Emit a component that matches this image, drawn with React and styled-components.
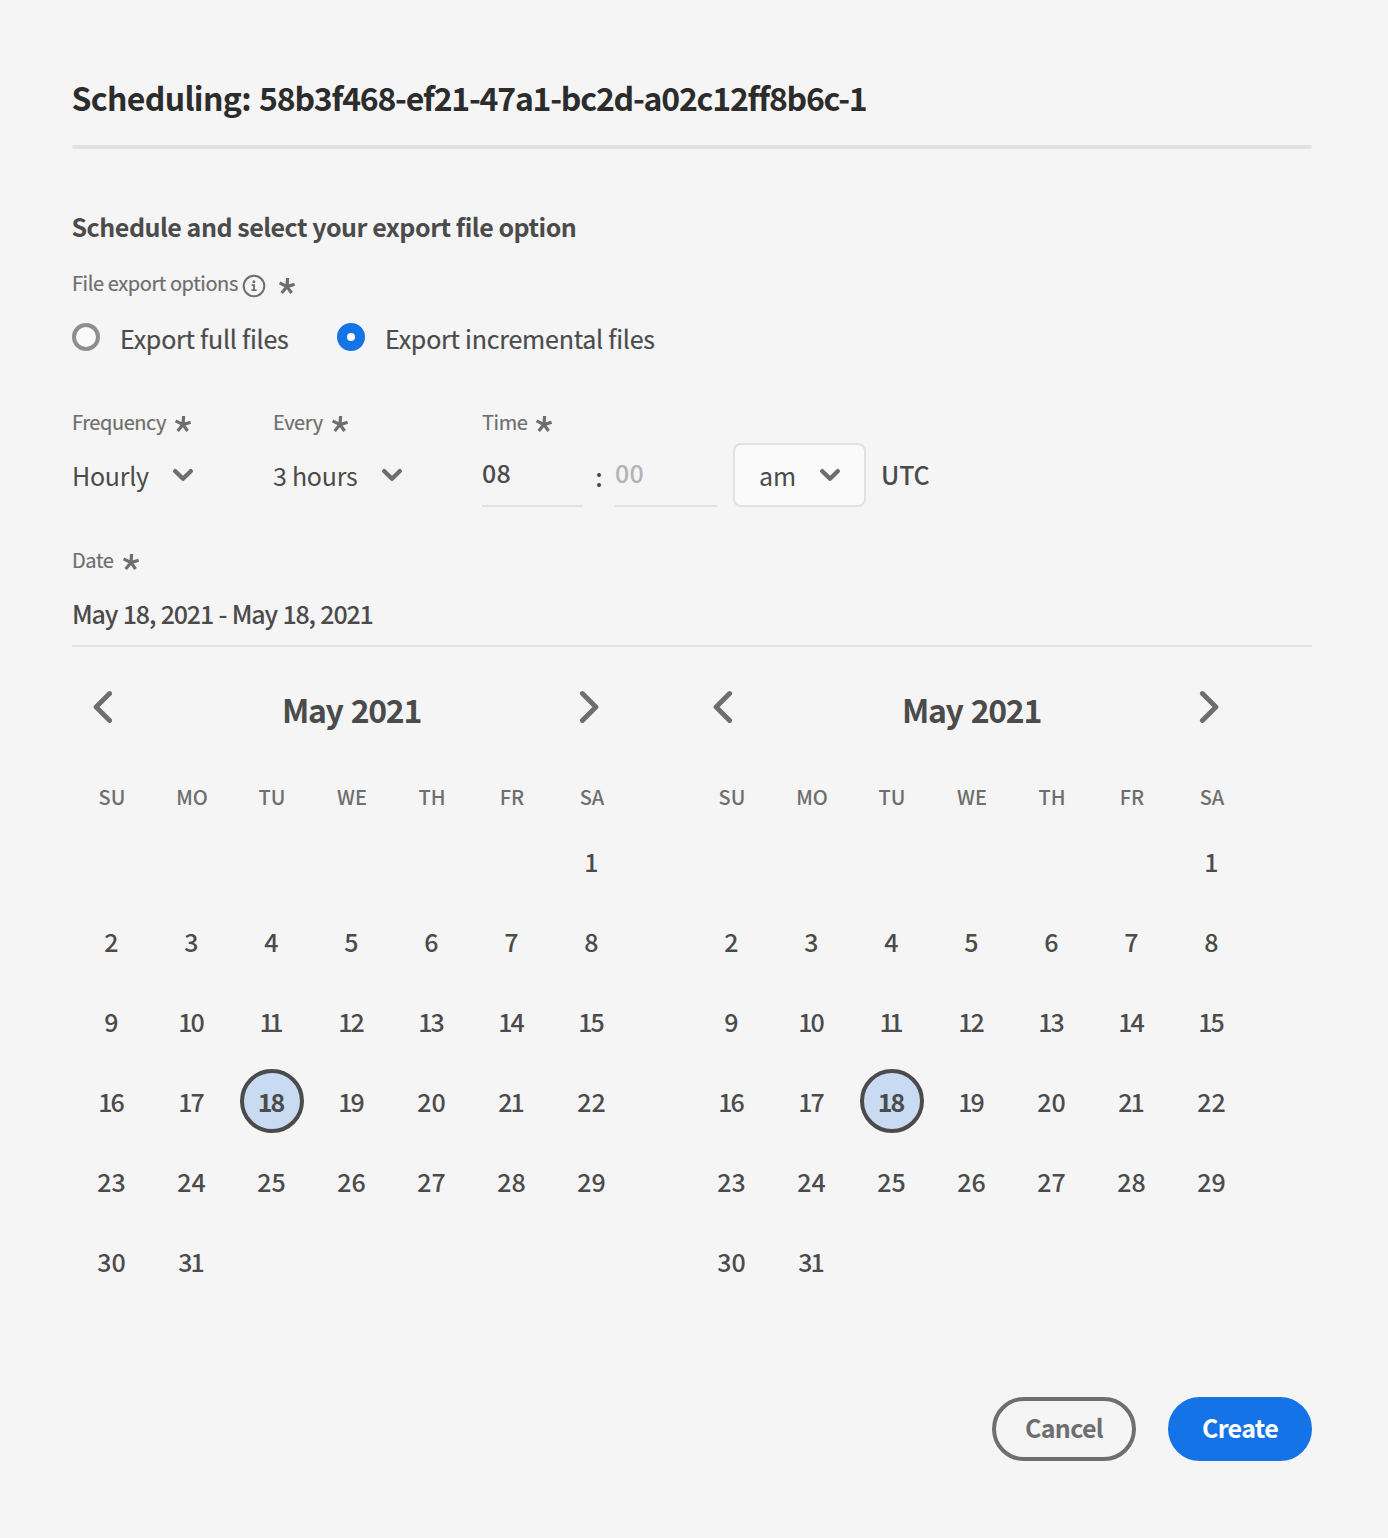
import React from "react";
import styled, { createGlobalStyle } from "styled-components";

const GlobalStyle = createGlobalStyle`
  * { box-sizing: border-box; }
  body {
    margin: 0;
    background: #f5f5f5;
    color: #4b4b4b;
    font-family: "Noto Sans CJK SC", "Open Sans", sans-serif;
    font-size: 25px;
  }
  button, input { font: inherit; color: inherit; }
`;

const Dialog = styled.main`
  width: 1388px;
  height: 1538px;
  padding: 72px 76px 77px 72px;
  display: flex;
  flex-direction: column;
`;

const Title = styled.h1`
  margin: 0 0 0 -0.5px;
  color: #2c2c2c;
  font-size: 32px;
  line-height: 50px;
  letter-spacing: -0.66px;
  word-spacing: 1.5px;
  white-space: nowrap;
`;

const JobId = styled.span`
  letter-spacing: -1.22px;
`;

const Divider = styled.hr`
  width: 100%;
  height: 4px;
  margin: 23px 0 61px;
  border: 0;
  border-radius: 2px;
  background: #e1e1e1;
`;

const Heading = styled.h2`
  margin: 0 0 29px -0.5px;
  font-size: 25px;
  line-height: 32px;
  letter-spacing: -0.48px;
`;

const Label = styled.div`
  display: flex;
  height: 24px;
  color: #6e6e6e;
  font-size: 20px;
  line-height: ${(p) => p.$lh || 26}px;
  white-space: nowrap;
  letter-spacing: -0.42px;
  -webkit-text-stroke: 0.2px #6e6e6e;
`;

const LabelText = styled.span`
  width: ${(p) => p.$w}px;
`;

const AsteriskSvg = styled.svg`
  width: 18px;
  height: 18px;
  margin-top: 6px;
  flex: none;
`;

const InfoSvg = styled.svg`
  width: 24px;
  height: 24px;
  margin: 3px 12px 0 0;
  flex: none;
`;

const RadioGroup = styled.div`
  display: flex;
  margin-top: 28px;
`;

const RadioOption = styled.label`
  display: flex;
  width: ${(p) => p.$w}px;
  height: 28px;
  gap: 20px;
  white-space: nowrap;
  line-height: 30px;
  letter-spacing: -0.23px;
  -webkit-text-stroke: 0.2px #4b4b4b;
`;

const RadioDot = styled.span`
  width: 28px;
  height: 28px;
  flex: none;
  border-radius: 50%;
  border: ${(p) => (p.$on ? "10px solid #1473e6" : "4px solid #8e8e8e")};
  background: ${(p) => (p.$on ? "#ffffff" : "#fafafa")};
`;

const Fields = styled.div`
  display: flex;
  margin-top: 58px;
`;

const Field = styled.div`
  display: flex;
  flex-direction: column;
  gap: 10px;
  width: ${(p) => p.$w};
`;

const Picker = styled.button`
  display: flex;
  align-items: center;
  height: 64px;
  padding: 0;
  border: 0;
  background: none;
  line-height: 64px;
  text-align: left;
  letter-spacing: -0.26px;
`;

const BoxPicker = styled(Picker)`
  width: 133px;
  margin-left: 16px;
  padding-left: 24px;
  border: 2px solid #e1e1e1;
  border-radius: 8px;
  background: #fafafa;
  letter-spacing: 0;
`;

const PickerText = styled.span`
  width: ${(p) => p.$w}px;
`;

const ChevronSvg = styled.svg`
  width: 20px;
  height: 14px;
  flex: none;
`;

const TimeRow = styled.div`
  display: flex;
  height: 64px;
`;

const TimeInput = styled.input`
  width: ${(p) => p.$w}px;
  height: 64px;
  padding: 0 0 4px;
  border: 0;
  border-bottom: 2px solid #e1e1e1;
  border-radius: 0;
  outline: none;
  background: none;
  font-weight: 500;
  letter-spacing: 0.3px;
  &::placeholder { color: #b3b3b3; opacity: 1; }
`;

const Colon = styled.span`
  width: 32px;
  text-align: center;
  font-weight: 500;
  line-height: 66px;
`;

const Zone = styled.span`
  margin-left: 15px;
  font-weight: 500;
  line-height: 62px;
  letter-spacing: -0.2px;
`;

const DateField = styled(Field)`
  gap: 12px;
  margin-top: 40px;
`;

const DateValue = styled.div`
  height: 64px;
  border-bottom: 2px solid #e1e1e1;
  font-weight: 500;
  line-height: 60px;
  letter-spacing: -1.16px;
  word-spacing: 1px;
  white-space: nowrap;
`;

const Calendars = styled.div`
  display: flex;
  gap: 60px;
`;

const Calendar = styled.section`
  width: 560px;
`;

const MonthBar = styled.header`
  display: flex;
  align-items: center;
  justify-content: space-between;
  height: 120px;
  padding: 0 32px 0 19px;
`;

const Arrow = styled.button`
  display: flex;
  padding: 0;
  border: 0;
  background: none;
`;

const MonthName = styled.h3`
  margin: 4px 0 0 12px;
  font-size: 32px;
  line-height: 40px;
  letter-spacing: -1.3px;
  word-spacing: 2px;
`;

const Weekdays = styled.div`
  display: grid;
  grid-template-columns: repeat(7, 80px);
  height: 54px;
  color: #6e6e6e;
  font-size: 20px;
  font-weight: 500;
  line-height: 60px;
  text-align: center;
`;

const Days = styled.div`
  display: grid;
  grid-template-columns: repeat(7, 80px);
  grid-auto-rows: 80px;
  place-items: center;
`;

const Day = styled.span`
  display: flex;
  align-items: center;
  justify-content: center;
  width: 64px;
  height: 64px;
  border-radius: 50%;
  border: ${(p) => (p.$selected ? "4px solid #4b4b4b" : "0")};
  background: ${(p) => (p.$selected ? "#c9dbf3" : "none")};
  font-weight: ${(p) => (p.$selected ? 700 : 500)};
  line-height: 56px;
  grid-column-start: ${(p) => p.$col || "auto"};
`;

const DayNumber = styled.span`
  letter-spacing: ${(p) => p.$ls}px;
  margin-right: ${(p) => 1 - p.$ls}px;
`;

const Actions = styled.footer`
  display: flex;
  justify-content: flex-end;
  gap: 32px;
  margin-top: auto;
`;

const Button = styled.button`
  width: 144px;
  height: 64px;
  padding: 0 0 4px;
  border-radius: 32px;
  border: 4px solid ${(p) => (p.$primary ? "#1473e6" : "#6e6e6e")};
  background: ${(p) => (p.$primary ? "#1473e6" : "transparent")};
  color: ${(p) => (p.$primary ? "#ffffff" : "#6e6e6e")};
  font-weight: 700;
  line-height: 52px;
  letter-spacing: -0.65px;
`;

const Asterisk = () => (
  <AsteriskSvg viewBox="-9 -9 18 18" stroke="#6e6e6e" strokeWidth="3.2">
    <path d="M0 .6 .6 -8M0 .6 7.6 -1.8M0 .6 4.6 7M0 .6 -5.3 7M0 .6 -7.4 -3.2" />
  </AsteriskSvg>
);

const Info = () => (
  <InfoSvg viewBox="0 0 24 24" fill="none" stroke="#6e6e6e" strokeWidth="2">
    <circle cx="12" cy="12" r="10.3" />
    <circle cx="11.9" cy="7.7" r="1.5" fill="#6e6e6e" stroke="none" />
    <path d="M9.6 11.2H12V16M9.4 16.1h5.2" strokeWidth="1.8" />
  </InfoSvg>
);

const Chevron = () => (
  <ChevronSvg viewBox="0 0 20 14" fill="none" stroke="#6e6e6e" strokeWidth="4.4" strokeLinecap="round" strokeLinejoin="round">
    <path d="M2.3 3.2 10 10.8 17.7 3.2" />
  </ChevronSvg>
);

const MonthArrow = ({ next }) => (
  <Arrow aria-label={next ? "Next month" : "Previous month"}>
    <svg width="21" height="32" viewBox="0 0 21 32" fill="none" stroke="#6e6e6e" strokeWidth="4.9" strokeLinecap="round" strokeLinejoin="round">
      <path d={next ? "M3.4 2.6 16.9 16 3.4 29.4" : "M18.6 2.6 5.1 16 18.6 29.4"} />
    </svg>
  </Arrow>
);

const WEEK = ["SU", "MO", "TU", "WE", "TH", "FR", "SA"];
const DAYS = Array.from({ length: 31 }, (_, i) => i + 1);

// The digit 1 is narrow, so numbers that hold it are set tighter.
const tracking = (day) => {
  const ones = String(day).split("1").length - 1;
  return [0, -2.2, -4.4][ones];
};

const MonthCalendar = () => (
  <Calendar>
    <MonthBar>
      <MonthArrow />
      <MonthName>May 2021</MonthName>
      <MonthArrow next />
    </MonthBar>
    <Weekdays>
      {WEEK.map((d) => <span key={d}>{d}</span>)}
    </Weekdays>
    <Days>
      {DAYS.map((d) => (
        <Day key={d} $col={d === 1 ? 7 : null} $selected={d === 18}>
          <DayNumber $ls={d > 9 ? tracking(d) : 0}>{d}</DayNumber>
        </Day>
      ))}
    </Days>
  </Calendar>
);

export default function App() {
  return (
    <>
      <GlobalStyle />
      <Dialog>
        <Title>Scheduling: <JobId>58b3f468-ef21-47a1-bc2d-a02c12ff8b6c-1</JobId></Title>
        <Divider />
        <Heading>Schedule and select your export file option</Heading>
        <Label $lh={24}>
          <LabelText $w={170}>File export options</LabelText>
          <Info />
          <Asterisk />
        </Label>
        <RadioGroup>
          <RadioOption $w={265}>
            <RadioDot />Export full files
          </RadioOption>
          <RadioOption $w={330}>
            <RadioDot $on />Export incremental files
          </RadioOption>
        </RadioGroup>
        <Fields>
          <Field $w="201px">
            <Label><LabelText $w={102}>Frequency</LabelText><Asterisk /></Label>
            <Picker><PickerText $w={101}>Hourly</PickerText><Chevron /></Picker>
          </Field>
          <Field $w="209px">
            <Label><LabelText $w={58}>Every</LabelText><Asterisk /></Label>
            <Picker><PickerText $w={109}>3 hours</PickerText><Chevron /></Picker>
          </Field>
          <Field $w="480px">
            <Label><LabelText $w={53}>Time</LabelText><Asterisk /></Label>
            <TimeRow>
              <TimeInput $w={101} defaultValue="08" />
              <Colon>:</Colon>
              <TimeInput $w={102} placeholder="00" />
              <BoxPicker><PickerText $w={61}>am</PickerText><Chevron /></BoxPicker>
              <Zone>UTC</Zone>
            </TimeRow>
          </Field>
        </Fields>
        <DateField $w="100%">
          <Label><LabelText $w={50}>Date</LabelText><Asterisk /></Label>
          <DateValue>May 18, 2021 - May 18, 2021</DateValue>
        </DateField>
        <Calendars>
          <MonthCalendar />
          <MonthCalendar />
        </Calendars>
        <Actions>
          <Button>Cancel</Button>
          <Button $primary>Create</Button>
        </Actions>
      </Dialog>
    </>
  );
}
